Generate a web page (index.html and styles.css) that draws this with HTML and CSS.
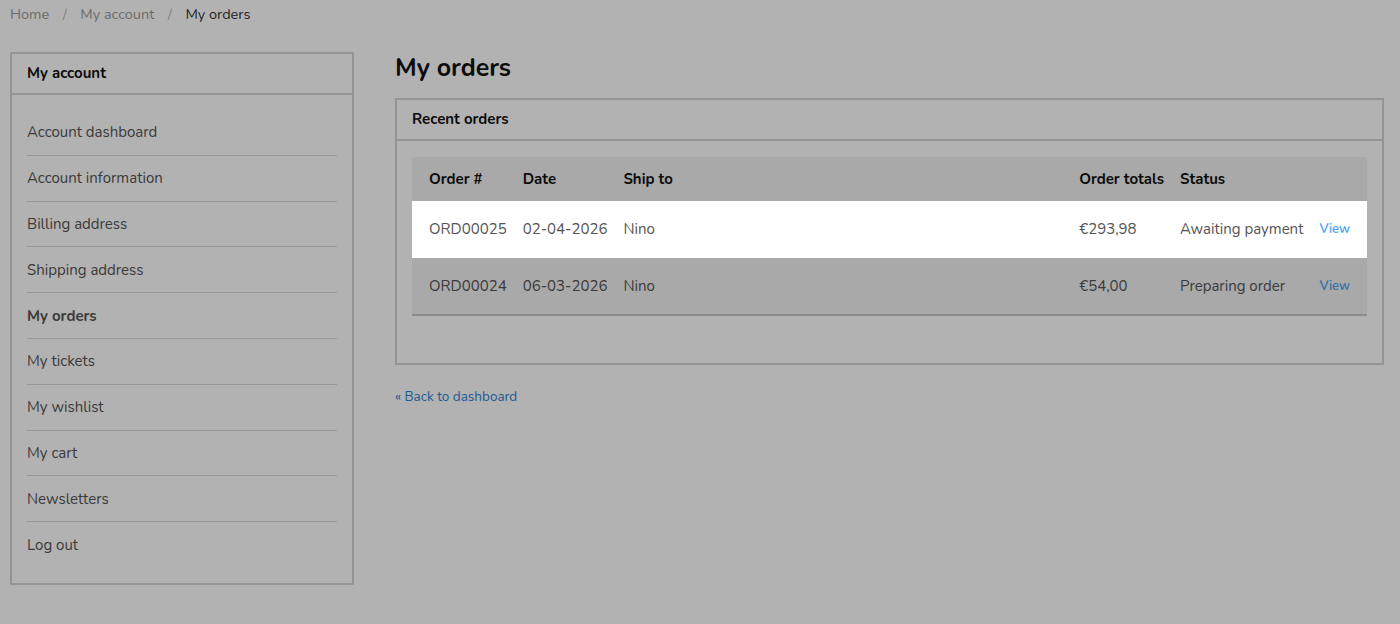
FILE: index.html
```html
<!DOCTYPE html>
<html lang="en">
<head>
<meta charset="UTF-8">
<meta name="viewport" content="width=device-width, initial-scale=1.0">
<title>My orders</title>
<link rel="stylesheet" href="styles.css">
</head>

<body>
  <nav class="breadcrumb">
      <a href="#">Home</a>
      <span class="sep">/</span>
      <a href="#">My account</a>
      <span class="sep">/</span>
      <span class="current">My orders</span>
  </nav>

  <div class="layout">
      <aside class="account-box">
          <h3 class="account-title">My account</h3>
          <ul class="account-menu">
              <li><a href="#">Account dashboard</a></li>
              <li><a href="#">Account information</a></li>
              <li><a href="#">Billing address</a></li>
              <li><a href="#">Shipping address</a></li>
              <li class="active"><a href="#">My orders</a></li>
              <li><a href="#">My tickets</a></li>
              <li><a href="#">My wishlist</a></li>
              <li><a href="#">My cart</a></li>
              <li><a href="#">Newsletters</a></li>
              <li><a href="#">Log out</a></li>
          </ul>
      </aside>

      <main class="content">
          <h1>My orders</h1>

          <div class="panel">
              <div class="panel-title">Recent orders</div>
              <div class="panel-body">
                  <table class="orders">
                      <thead>
                          <tr>
                              <th>Order #</th>
                              <th>Date</th>
                              <th class="grow">Ship to</th>
                              <th>Order totals</th>
                              <th>Status</th>
                              <th></th>
                          </tr>
                      </thead>
                      <tbody>
                          <tr class="highlight">
                              <td>ORD00025</td>
                              <td>02-04-2026</td>
                              <td>Nino</td>
                              <td>€293,98</td>
                              <td>Awaiting payment</td>
                              <td><a href="#" class="view">View</a></td>
                          </tr>
                          <tr>
                              <td>ORD00024</td>
                              <td>06-03-2026</td>
                              <td>Nino</td>
                              <td>€54,00</td>
                              <td>Preparing order</td>
                              <td><a href="#" class="view">View</a></td>
                          </tr>
                      </tbody>
                  </table>
              </div>
          </div>

          <a href="#" class="back-link">« Back to dashboard</a>
      </main>
  </div>

  <div class="overlay"></div>
</body>
</html>
```

FILE: styles.css
```css
* {
  box-sizing: border-box;
  margin: 0;
  padding: 0;
}

body {
  font-family: "Nunito", "Lato", sans-serif;
  font-size: 15px;
  color: #555;
  background-color: #fff;
  padding: 0 10px;
}

a {
  text-decoration: none;
}

.breadcrumb {
  height: 28px;
  display: flex;
  align-items: center;
  font-size: 14.5px;
}

.breadcrumb a {
  color: #999;
}

.breadcrumb .sep {
  color: #bbb;
  margin: 0 13.5px;
}

.breadcrumb .current {
  color: #333;
}

.layout {
  display: flex;
  gap: 41px;
  margin-top: 24px;
}

/* sidebar */
.account-box {
  width: 344px;
  flex-shrink: 0;
  border: 2px solid #d4d4d4;
  padding-bottom: 15px;
}

.account-title {
  font-size: 15px;
  font-weight: 700;
  color: #111;
  padding: 0 15px;
  height: 41px;
  line-height: 39px;
  border-bottom: 2px solid #d4d4d4;
}

.account-menu {
  list-style: none;
  padding: 15px 15px 0 15px;
}

.account-menu li {
  border-bottom: 1px solid #dcdcdc;
  height: 45.8px;
  display: flex;
  align-items: center;
}

.account-menu li:last-child {
  border-bottom: none;
}

.account-menu a {
  color: #555;
}

.account-menu li.active a {
  font-weight: 700;
}

/* main */
.content {
  flex: 1;
  padding-right: 6px;
}

.content h1 {
  font-size: 25px;
  font-weight: 700;
  color: #111;
  height: 46px;
  line-height: 30px;
  padding-top: 1px;
}

.panel {
  border: 2px solid #d4d4d4;
}

.panel-title {
  font-weight: 700;
  color: #111;
  height: 41px;
  line-height: 39px;
  padding: 0 15px;
  border-bottom: 2px solid #d4d4d4;
}

.panel-body {
  padding: 16px 15px 47px 15px;
}

.orders {
  width: 100%;
  border-collapse: collapse;
  border-bottom: 2px solid #c8c8c8;
}

.orders thead tr {
  background-color: #f2f2f2;
}

.orders th {
  text-align: left;
  font-weight: 700;
  color: #111;
  height: 44px;
  padding: 0 8px;
  white-space: nowrap;
}

.orders td {
  height: 57px;
  padding: 0 8px 1px 8px;
  white-space: nowrap;
  background-color: #fff;
}

.orders tr:last-child td {
  background-color: #f2f2f2;
}

.orders th:first-child, .orders td:first-child {
  padding-left: 17px;
}

.orders th:last-child, .orders td:last-child {
  padding-right: 17px;
}

.orders .grow {
  width: 100%;
}

.orders .view {
  color: #48a4ee;
  font-size: 13px;
  font-weight: 600;
  position: relative;
  top: -1px;
}

.orders tr.highlight {
  position: relative;
  z-index: 20;
}

.back-link {
  display: inline-block;
  margin-top: 22px;
  font-size: 13.5px;
  color: #2c82d0;
}

.overlay {
  position: fixed;
  top: 0;
  left: 0;
  right: 0;
  bottom: 0;
  background-color: rgba(0, 0, 0, 0.3);
  z-index: 10;
}
```
